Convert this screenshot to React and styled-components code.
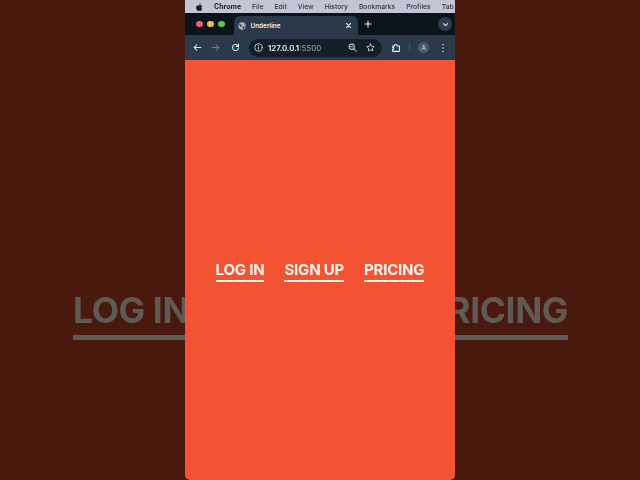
import React from 'react';
import styled, { createGlobalStyle } from 'styled-components';

const GlobalStyle = createGlobalStyle`
  html, body, #root {
    margin: 0;
    padding: 0;
    width: 640px;
    height: 480px;
    overflow: hidden;
  }
  body {
    font-family: Inter, "Liberation Sans", sans-serif;
  }
`;

const Stage = styled.div`
  position: relative;
  width: 640px;
  height: 480px;
  background: #4a190d;
  display: flex;
  justify-content: center;
  overflow: hidden;
`;

// blurred, enlarged copy of the video behind the phone-sized frame
const Ghost = styled.div`
  position: absolute;
  left: 73px;
  top: 291px;
  display: flex;
  gap: 47px;
  filter: blur(0.6px);
`;

const GhostLink = styled.span`
  font-size: 35.5px;
  line-height: 40px;
  font-weight: 700;
  letter-spacing: -0.4px;
  color: #5f5a56;
  padding-bottom: 4px;
  border-bottom: 5px solid #5f5a56;
  white-space: nowrap;
`;

const Browser = styled.div`
  position: relative;
  width: 270px;
  height: 480px;
  display: flex;
  flex-direction: column;
  background: #f35233;
  border-radius: 0 0 5px 5px;
  overflow: hidden;
  filter: blur(0.25px);
`;

const MenuBar = styled.div`
  height: 13px;
  flex: none;
  background: #c3c5d6;
  display: flex;
  align-items: center;
  padding-left: 11px;
  gap: 11px;
  font-size: 6.75px;
  font-weight: 500;
  color: #33343c;
  white-space: nowrap;
  & > svg {
    flex: none;
  }
`;

const AppName = styled.span`
  font-weight: 700;
  font-size: 7px;
  color: #1c1d22;
`;

const TabStrip = styled.div`
  height: 22px;
  flex: none;
  background: #0c141b;
  display: flex;
  align-items: flex-end;
  position: relative;
`;

const Lights = styled.div`
  display: flex;
  gap: 4.5px;
  padding: 0 7px 0 11px;
  align-self: center;
`;

const Light = styled.span`
  width: 6.5px;
  height: 6.5px;
  border-radius: 50%;
  background: ${p => p.$color};
`;

const Tab = styled.div`
  width: 124px;
  height: 19px;
  margin-left: 2px;
  padding: 0 6px 0 4px;
  box-sizing: border-box;
  background: #2b3a4a;
  border-radius: 6px 6px 0 0;
  display: flex;
  align-items: center;
  gap: 5px;
  color: #eef1f4;
  font-size: 6.4px;
  font-weight: 600;
`;

const TabTitle = styled.span`
  flex: 1;
`;

const NewTab = styled.span`
  margin-left: 6px;
  align-self: center;
  display: flex;
`;

const TabMenu = styled.span`
  position: absolute;
  right: 3px;
  top: 4px;
  width: 14px;
  height: 14px;
  border-radius: 50%;
  background: #2c3c4a;
  display: flex;
  align-items: center;
  justify-content: center;
`;

const Toolbar = styled.div`
  height: 25px;
  flex: none;
  background: #2b3a4a;
  display: flex;
  align-items: center;
  padding: 0 6px 0 8px;
`;

const NavIcon = styled.span`
  display: flex;
  width: ${p => p.$width || 18}px;
  justify-content: ${p => p.$align || 'flex-start'};
`;

const Omnibox = styled.div`
  width: 133px;
  height: 18px;
  padding: 0 7px 0 5px;
  box-sizing: border-box;
  border-radius: 9px;
  background: #121e28;
  display: flex;
  align-items: center;
  gap: 5px;
  font-size: 7.8px;
  font-weight: 600;
  color: #eef1f4;
`;

const Url = styled.span`
  flex: 1;
`;

const Port = styled.span`
  color: #8d98a2;
  font-weight: 500;
`;

const ToolActions = styled.div`
  flex: 1;
  display: flex;
  align-items: center;
  padding-left: 9px;
`;

const Divider = styled.span`
  width: 1px;
  height: 9px;
  background: #45535f;
  margin: 0 8px 0 8px;
`;

const Avatar = styled.span`
  width: 11px;
  height: 11px;
  border-radius: 50%;
  background: #4b5a68;
  color: #d7dde2;
  font-size: 6px;
  display: flex;
  align-items: center;
  justify-content: center;
  margin-right: 9px;
`;

const Page = styled.div`
  flex: 1;
  display: flex;
  justify-content: center;
  padding-top: 201px;
  gap: 20px;
`;

const NavLink = styled.a`
  height: 19px;
  font-size: 15px;
  line-height: 17px;
  font-weight: 700;
  letter-spacing: -0.2px;
  color: #fff6ee;
  border-bottom: 2.5px solid #fff6ee;
  white-space: nowrap;
`;

const Stroke = ({ size = 10, color = '#d8dee3', width = 1.4, children }) => (
  <svg width={size} height={size} viewBox="0 0 12 12" fill="none" stroke={color} strokeWidth={width} strokeLinecap="round" strokeLinejoin="round">
    {children}
  </svg>
);

const App = () => (
  <Stage>
    <GlobalStyle />
    <Ghost>
      <GhostLink>LOG IN</GhostLink>
      <GhostLink>SIGN UP</GhostLink>
      <GhostLink>PRICING</GhostLink>
    </Ghost>
    <Browser>
      <MenuBar>
        <svg width="7" height="8" viewBox="0 0 12 14" fill="#1c1d22">
          <path d="M8.3 0.5c.1 1-.3 1.8-.8 2.4-.6.6-1.3 1-2.1.9-.1-.9.3-1.8.8-2.3.6-.6 1.4-1 2.1-1zM10.6 10.2c-.4.9-.6 1.2-1.1 2-.7 1-1.3 1.6-2.1 1.6-.7 0-1.1-.5-2-.4-.9 0-1.3.4-2 .4-.8 0-1.4-.7-2-1.6C-.2 9.900-.4 7.200.7 5.700c.7-1 1.800-1.600 2.800-1.600s1.600.6 2.500.6c.8 0 1.300-.6 2.500-.6.9 0 1.800.5 2.500 1.300-2.200 1.200-1.800 4.300-.4 4.800z" />
        </svg>
        <AppName>Chrome</AppName>
        <span>File</span>
        <span>Edit</span>
        <span>View</span>
        <span>History</span>
        <span>Bookmarks</span>
        <span>Profiles</span>
        <span>Tab</span>
      </MenuBar>
      <TabStrip>
        <Lights>
          <Light $color="#ed5f6b" />
          <Light $color="#f4bd4f" />
          <Light $color="#5fc84f" />
        </Lights>
        <Tab>
          <svg width="8" height="8" viewBox="0 0 12 12" fill="#aab4bd">
            <circle cx="6" cy="6" r="5.5" />
            <path d="M2 3l3 1 1 2-2 1-2-2zM7 7l3-1-1 4-2 0z" fill="#2b3a4a" />
          </svg>
          <TabTitle>Underline</TabTitle>
          <Stroke size={7} color="#eef1f4" width={1.8}>
            <path d="M2.500 2.500l7 7M9.500 2.500l-7 7" />
          </Stroke>
        </Tab>
        <NewTab>
          <Stroke size={8} color="#f2f4f6" width={1.6}>
            <path d="M6 1.500v9M1.500 6h9" />
          </Stroke>
        </NewTab>
        <TabMenu>
          <Stroke size={7} color="#e5e9ec" width={1.8}>
            <path d="M2.500 4.500L6 8l3.500-3.500" />
          </Stroke>
        </TabMenu>
      </TabStrip>
      <Toolbar>
        <NavIcon>
          <Stroke size={9} color="#e3e8ec">
            <path d="M10.500 6h-9M5 2.500L1.500 6 5 9.500" />
          </Stroke>
        </NavIcon>
        <NavIcon $width={20}>
          <Stroke size={9} color="#6f7c87">
            <path d="M1.500 6h9M7 2.500L10.500 6 7 9.500" />
          </Stroke>
        </NavIcon>
        <NavIcon>
          <Stroke size={9} color="#e3e8ec">
            <path d="M10 6.500a4 4 0 1 1-1.200-3.300L10 4.500M10 1.500v3H7" />
          </Stroke>
        </NavIcon>
        <Omnibox>
          <Stroke size={9} color="#e3e8ec" width={1.1}>
            <circle cx="6" cy="6" r="5" />
            <path d="M6 5.500v3M6 3.500v.2" />
          </Stroke>
          <Url>127.0.0.1<Port>:5500</Port></Url>
          <Stroke size={9} color="#bcc5cc">
            <circle cx="5" cy="5" r="3.500" />
            <path d="M7.800 7.800L11 11M3.500 5h3" />
          </Stroke>
          <NavIcon $align="flex-end" $width={13}>
            <Stroke size={9} color="#d8dee3" width={1.1}>
              <path d="M6 1.200l1.500 3.100 3.400.5-2.500 2.400.6 3.400L6 9l-3 1.600.6-3.400L1.100 4.800l3.400-.5z" />
            </Stroke>
          </NavIcon>
        </Omnibox>
        <ToolActions>
          <Stroke size={10} color="#e8ecef" width={1.3}>
            <path d="M2 3.500h2.200v-1.500h3v1.500h2.800v6.500H2V7.500h1.200V5.500H2z" />
          </Stroke>
          <Divider />
          <Avatar>A</Avatar>
          <Stroke size={10} color="#e8ecef" width={1.6}>
            <path d="M6 2v.1M6 6v.1M6 10v.1" />
          </Stroke>
        </ToolActions>
      </Toolbar>
      <Page>
        <NavLink>LOG IN</NavLink>
        <NavLink>SIGN UP</NavLink>
        <NavLink>PRICING</NavLink>
      </Page>
    </Browser>
  </Stage>
);

export default App;
